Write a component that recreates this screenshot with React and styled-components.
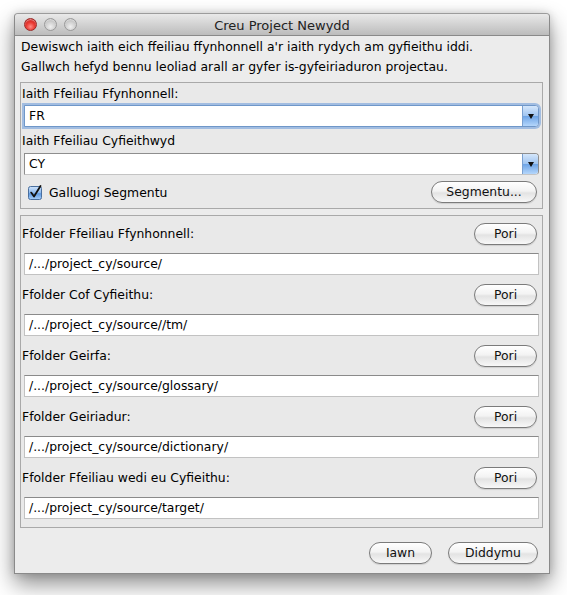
import React from "react";
import styled, { createGlobalStyle } from "styled-components";

const GlobalStyle = createGlobalStyle`
  html, body {
    margin: 0;
    padding: 0;
    background: #ffffff;
  }
  body {
    font-family: "DejaVu Sans", "Liberation Sans", sans-serif;
    font-size: 12.4px;
    color: #000;
  }
`;

const Page = styled.div`
  width: 567px;
  height: 595px;
  padding: 13px 0 0 14px;
  box-sizing: border-box;
`;

const Window = styled.div`
  width: 536px;
  height: 561px;
  box-sizing: border-box;
  border: 1px solid #8a8a8a;
  border-top-color: #9c9c9c;
  border-radius: 4px 4px 0 0;
  background: #ececec;
  box-shadow: 0 10px 22px rgba(0, 0, 0, 0.45), 0 0 8px rgba(0, 0, 0, 0.15);
  display: flex;
  flex-direction: column;
`;

const TitleBar = styled.div`
  position: relative;
  height: 21px;
  flex: none;
  border-bottom: 1px solid #8a8a8a;
  border-radius: 4px 4px 0 0;
  background: linear-gradient(#e9e9e9, #d2d2d2 50%, #bcbcbc);
  display: flex;
  align-items: center;
  justify-content: center;
`;

const Lights = styled.div`
  position: absolute;
  left: 9px;
  top: 4px;
  display: flex;
  gap: 7px;
`;

const Light = styled.span`
  width: 13px;
  height: 13px;
  border-radius: 50%;
  box-sizing: border-box;
  border: 1px solid ${p => (p.$red ? "#9b2a28" : "#9a9a9a")};
  background: ${p =>
    p.$red
      ? "radial-gradient(circle at 50% 70%, #ff8b84 0%, #ea3a33 45%, #b5120e 100%)"
      : "radial-gradient(circle at 50% 70%, #f0f0f0 0%, #d0d0d0 50%, #a9a9a9 100%)"};
  box-shadow: inset 0 1px 1px rgba(255, 255, 255, 0.5);
`;

const Title = styled.div`
  font-size: 13px;
  color: #222;
  padding-top: 1px;
`;

const Body = styled.div`
  flex: 1;
  display: flex;
  flex-direction: column;
  padding: 0 6px 0 5px;
`;

const Intro = styled.p`
  margin: 1px 0 0 1px;
  line-height: 20px;
`;

const Group = styled.div`
  margin-top: ${p => p.$top}px;
  border: 1px solid #a9a9a9;
  background: #e9e9e9;
  display: flex;
  flex-direction: column;
  padding: ${p => p.$pad};
`;

const Label = styled.div`
  line-height: 16px;
  padding-left: 1px;
  margin-top: ${p => p.$top || 0}px;
`;

const Combo = styled.div`
  height: 22px;
  box-sizing: border-box;
  margin-top: ${p => p.$top || 0}px;
  margin-left: 3px;
  margin-right: 3px;
  display: flex;
  align-items: stretch;
  background: #fff;
  border: 1px solid ${p => (p.$focus ? "#6f97c9" : "#8e8e8e")};
  border-bottom-color: ${p => (p.$focus ? "#6f97c9" : "#c4c4c4")};
  border-radius: 0 4px 4px 0;
  box-shadow: ${p => (p.$focus ? "0 0 0 2px rgba(115, 160, 220, 0.6)" : "none")};
`;

const ComboValue = styled.div`
  flex: 1;
  padding-left: 4px;
  line-height: 20px;
`;

const ComboArrow = styled.div`
  width: 15px;
  border-left: 1px solid #7aa0d0;
  border-radius: 0 3px 3px 0;
  background: linear-gradient(#d4e6fb, #9fc4f0 50%, #6ea4e6 51%, #b4d6fb);
  display: flex;
  align-items: center;
  justify-content: center;
  &::after {
    content: "";
    border-left: 3.5px solid transparent;
    border-right: 3.5px solid transparent;
    border-top: 5px solid #111;
  }
`;

const CheckRow = styled.div`
  margin-top: 5px;
  height: 24px;
  display: flex;
  align-items: center;
  padding-left: 7px;
  padding-right: 5px;
`;

const CheckLabel = styled.span`
  margin-left: 6px;
  flex: 1;
`;

const PillButton = styled.button`
  height: 22px;
  width: ${p => p.$w}px;
  box-sizing: border-box;
  border: 1px solid #7b7b7b;
  border-radius: 11px;
  background: linear-gradient(#ffffff, #f3f3f3 45%, #e3e3e3 55%, #f8f8f8);
  box-shadow: 0 1px 1px rgba(0, 0, 0, 0.12);
  font-family: inherit;
  font-size: 12.4px;
  color: #111;
  padding: 0;
  line-height: 20px;
`;

const FolderHead = styled.div`
  height: 22px;
  display: flex;
  align-items: center;
  justify-content: space-between;
  padding-right: 5px;
  margin-top: ${p => p.$top}px;
`;

const TextField = styled.div`
  height: 22px;
  box-sizing: border-box;
  margin: 8px 3px 0 3px;
  background: #fff;
  border: 1px solid #c2c2c2;
  border-top-color: #8a8a8a;
  padding-left: 4px;
  line-height: 20px;
`;

const Footer = styled.div`
  margin-top: 14px;
  display: flex;
  justify-content: flex-end;
  gap: 16px;
  padding-right: 5px;
`;

const CheckBox = () => (
  <svg width="15" height="15" viewBox="0 0 15 15">
    <defs>
      <linearGradient id="cb" x1="0" y1="0" x2="0" y2="1">
        <stop offset="0" stopColor="#cfe3fa" />
        <stop offset="0.5" stopColor="#8ab8ee" />
        <stop offset="0.55" stopColor="#5d98e0" />
        <stop offset="1" stopColor="#a8d0fb" />
      </linearGradient>
    </defs>
    <rect x="0.5" y="1.5" width="13" height="13" rx="2" fill="url(#cb)" stroke="#4a6f9e" />
    <path d="M3.2 7.6 L6 11.5 L12.5 1" fill="none" stroke="#111" strokeWidth="1.8" strokeLinecap="round" strokeLinejoin="round" />
  </svg>
);

const folders = [
  ["Ffolder Ffeiliau Ffynhonnell:", "/.../project_cy/source/"],
  ["Ffolder Cof Cyfieithu:", "/.../project_cy/source//tm/"],
  ["Ffolder Geirfa:", "/.../project_cy/source/glossary/"],
  ["Ffolder Geiriadur:", "/.../project_cy/source/dictionary/"],
  ["Ffolder Ffeiliau wedi eu Cyfieithu:", "/.../project_cy/source/target/"],
];

export default function App() {
  return (
    <Page>
      <GlobalStyle />
      <Window>
        <TitleBar>
          <Lights>
            <Light $red />
            <Light />
            <Light />
          </Lights>
          <Title>Creu Project Newydd</Title>
        </TitleBar>
        <Body>
          <Intro>
            Dewiswch iaith eich ffeiliau ffynhonnell a'r iaith rydych am gyfieithu iddi.
            <br />
            Gallwch hefyd bennu leoliad arall ar gyfer is-gyfeiriaduron projectau.
          </Intro>
          <Group $top={5} $pad="3px 0 4px 0">
            <Label>Iaith Ffeiliau Ffynhonnell:</Label>
            <Combo $top={3} $focus>
              <ComboValue>FR</ComboValue>
              <ComboArrow />
            </Combo>
            <Label $top={6}>Iaith Ffeiliau Cyfieithwyd</Label>
            <Combo $top={4}>
              <ComboValue>CY</ComboValue>
              <ComboArrow />
            </Combo>
            <CheckRow>
              <CheckBox />
              <CheckLabel>Galluogi Segmentu</CheckLabel>
              <PillButton $w={106}>Segmentu...</PillButton>
            </CheckRow>
          </Group>
          <Group $top={6} $pad="0 0 8px 0">
            {folders.map(([label, path], i) => (
              <React.Fragment key={label}>
                <FolderHead $top={i === 0 ? 7 : 9}>
                  <Label>{label}</Label>
                  <PillButton $w={63}>Pori</PillButton>
                </FolderHead>
                <TextField>{path}</TextField>
              </React.Fragment>
            ))}
          </Group>
          <Footer>
            <PillButton $w={63}>Iawn</PillButton>
            <PillButton $w={90}>Diddymu</PillButton>
          </Footer>
        </Body>
      </Window>
    </Page>
  );
}
